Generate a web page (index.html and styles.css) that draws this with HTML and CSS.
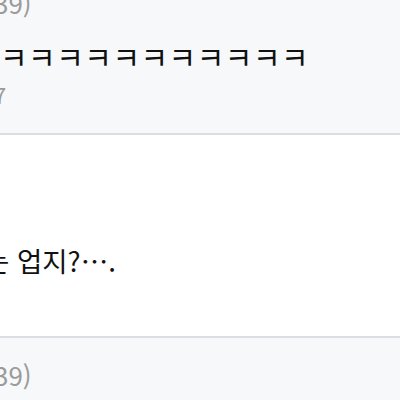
FILE: index.html
```html
<!DOCTYPE html>
<html lang="ko">
<head>
<meta charset="utf-8">
<link rel="stylesheet" href="styles.css">
</head>
<body>
<ul class="comments">
  <li class="comment comment--gray comment--first">
    <div class="meta">39)</div>
    <div class="text text--laugh">ㅋㅋㅋㅋㅋㅋㅋㅋㅋㅋㅋ</div>
    <div class="date">7</div>
  </li>
  <li class="comment comment--white">
    <div class="text text--reply">는 업지?….</div>
  </li>
  <li class="comment comment--gray comment--last">
    <div class="meta">39)</div>
  </li>
</ul>
</body>
</html>
```
FILE: styles.css
```css
html, body {
  margin: 0;
  padding: 0;
  background: #f7f8fa;
  overflow: hidden;
}
body {
  width: 400px;
  height: 400px;
  font-family: "Noto Sans CJK KR", "Noto Sans", sans-serif;
}
.comments {
  list-style: none;
  margin: 0;
  padding: 0;
}
.comment {
  border-bottom: 2px solid #dcdde2;
}
.comment--gray {
  background: #f7f8fa;
}
.comment--first {
  margin-top: -10px;
  padding-bottom: 28px;
}
.comment--white {
  background: #ffffff;
  padding: 111px 0 62px;
}
.comment--last {
  border-bottom: none;
  padding-top: 24px;
  height: 40px;
}
.meta {
  font-size: 26px;
  line-height: 26px;
  color: #9b9b9b;
  margin-left: -6px;
  white-space: nowrap;
}
.text {
  color: #111111;
  white-space: nowrap;
}
.text--laugh {
  font-size: 30px;
  line-height: 30px;
  margin-top: 25px;
  letter-spacing: 0.5px;
  margin-left: 0;
}
.text--reply {
  font-size: 27.5px;
  line-height: 28px;
  margin-left: -16px;
}
.date {
  font-size: 22px;
  line-height: 22px;
  color: #9b9b9b;
  margin-top: 12px;
  margin-left: -6px;
}
```
